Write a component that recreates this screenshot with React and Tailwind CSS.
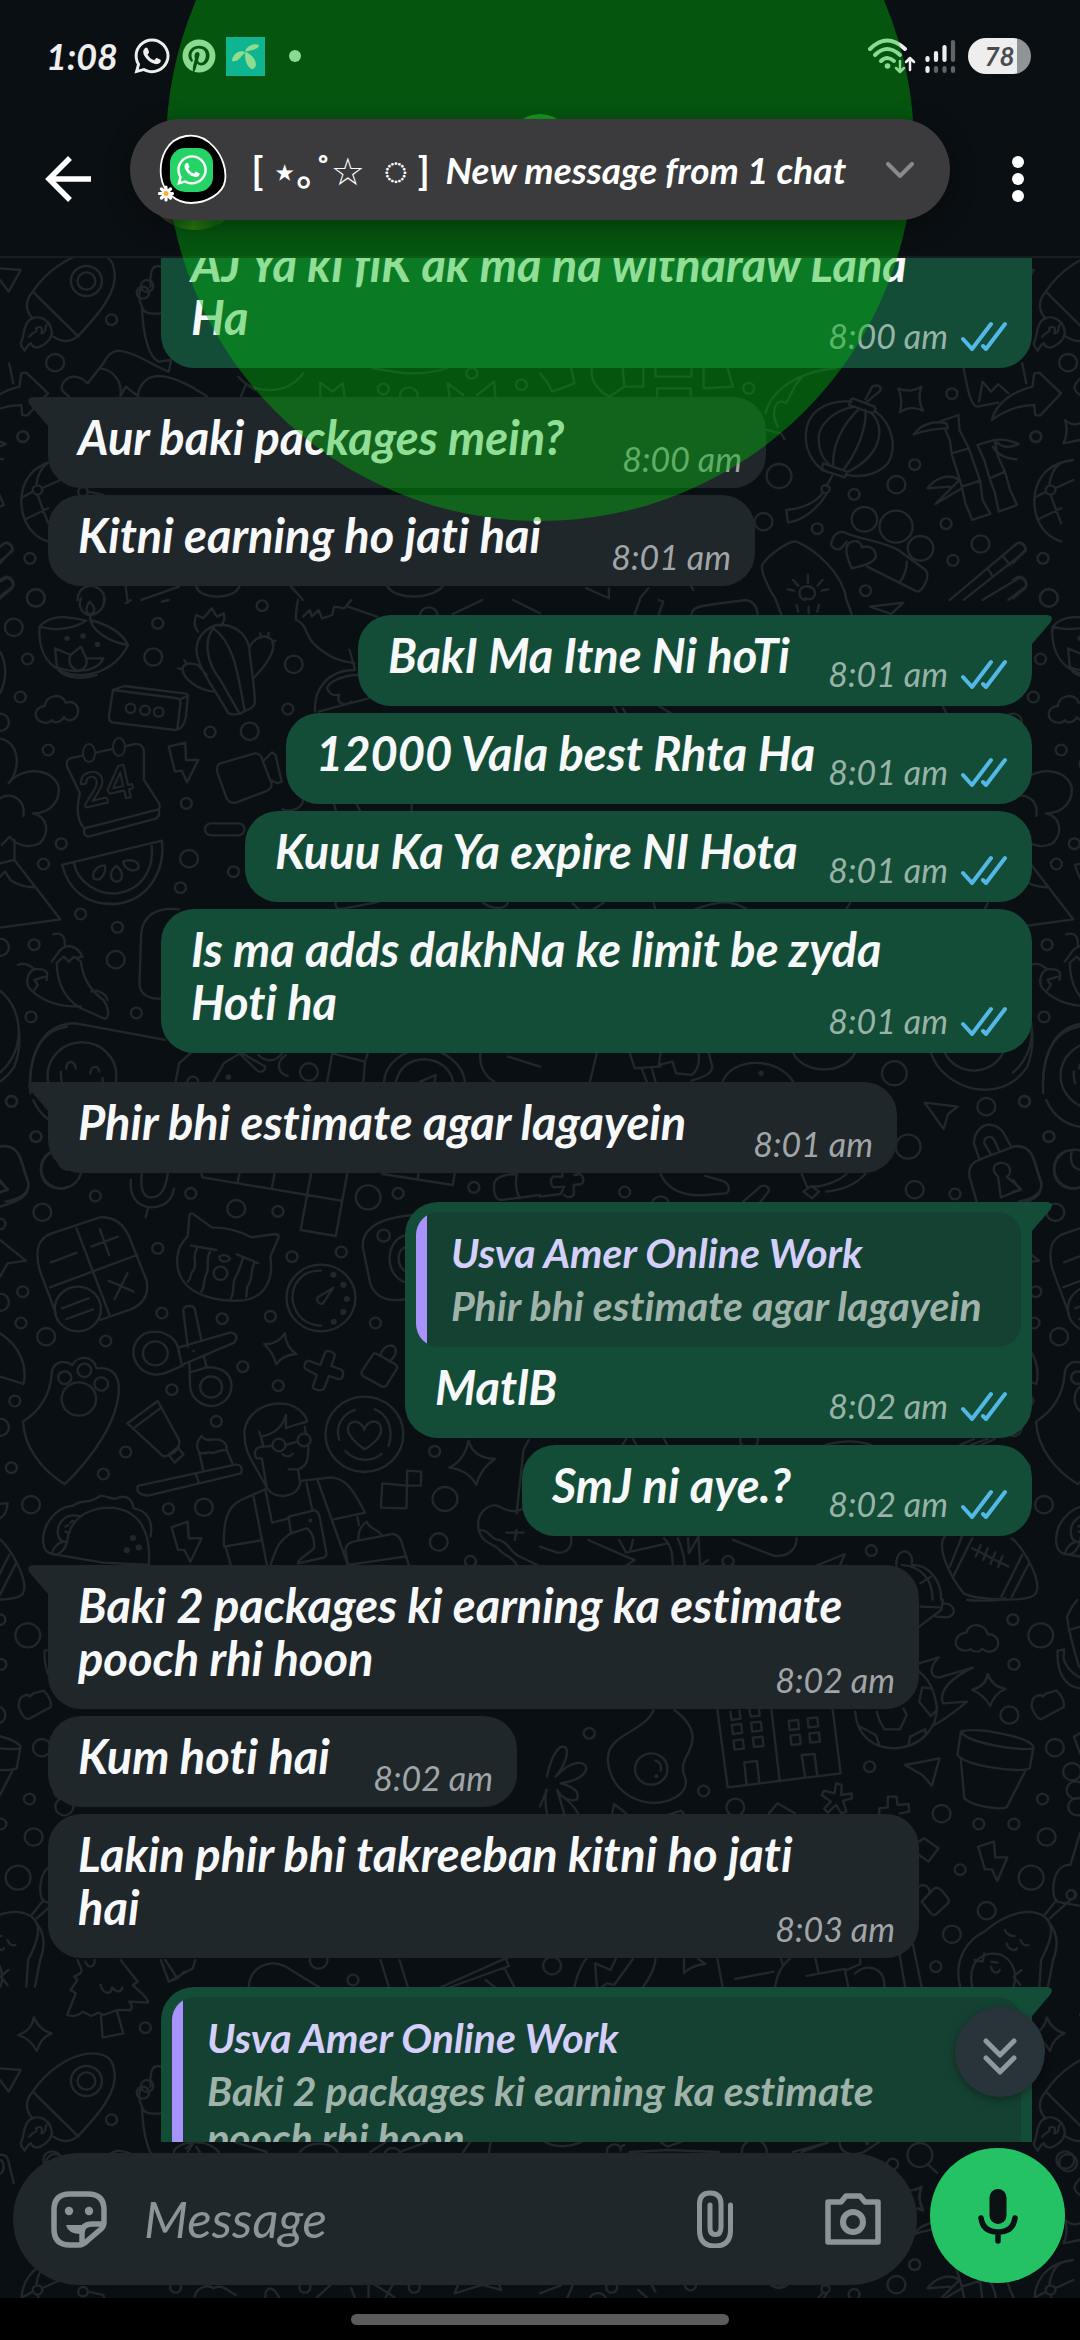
import React from "react";
import { FaWhatsapp, FaPinterest } from "react-icons/fa";

const SMALL = 16;
const MEDIUM = 26;
const LARGE = 36;

/* Doodle sheets of the wallpaper: an origin on the tile, line work, rings and solid dots. */
const sheets = [
  {
    origin: [0, 240],
    lines: [
      "M95 155C130 100 200 40 270 40C320 40 335 70 333 120C325 180 270 240 225 290C205 305 180 308 155 290M95 155L228 290M95 155C70 185 75 215 95 235",
      "M150 290C155 240 110 220 85 240C65 260 72 290 60 310C62 325 70 328 72 332C78 318 85 312 90 310C95 325 110 325 120 318C135 310 148 300 150 280M85 290C100 270 110 280 105 265C120 255 125 265 120 280C135 280 130 265 135 255",
      "M0 85L60 90L25 155L0 120",
      "M467 80C440 70 435 100 437 140M467 220C430 225 415 215 412 200C402 180 400 150 415 140M412 200C415 280 430 350 460 365L497 360L490 395C430 370 400 340 345 332C320 335 310 350 300 370L255 430C225 400 195 405 180 435C175 450 185 460 200 468M400 468C405 430 430 400 480 410C530 420 570 450 600 468M400 468L365 440L350 468M290 385C335 390 355 430 350 468",
      "M175 660C90 670 60 730 62 790C65 850 95 890 140 905M65 772L95 755M122 745L175 720M109 765L140 850M75 837L140 805M105 735C110 700 120 680 140 668M255 755L300 765L308 800",
      "M930 468L930 428L965 455L995 430L1000 468M1305 468L1300 430L1345 465M1385 465L1435 425L1438 468",
      "M880 400C830 470 730 460 692 410M740 450L715 432L700 468M1080 384C1160 400 1220 410 1300 384",
      "M0 970L35 930C40 915 20 900 10 912L0 920M0 1020L15 1010C35 1010 45 1030 35 1045L0 1075M225 1080C225 1040 270 1020 300 1060L305 1080M365 1040L370 1080M410 1080L520 1040M570 1040C580 1080 680 1080 695 1040M845 1040L880 1080M1125 1040C1150 1080 1250 1080 1285 1040",
    ],
    rings: [
      [251, 123, 45], [251, 123, 26], [427, 138, 18], [415, 158, 18], [109, 750, 14], [241, 755, 14],
      [324, 239, SMALL], [66, 590, SMALL], [87, 955, SMALL], [1113, 447, SMALL], [1514, 434, SMALL],
      [1370, 400, SMALL], [160, 368, MEDIUM], [104, 1073, MEDIUM], [1187, 468, MEDIUM],
    ],
  },
  {
    origin: [540, 240],
    lines: [
      "M905 485C850 480 790 500 775 560C760 630 800 680 825 690M975 515C1020 550 1040 620 1010 670C985 700 940 715 890 705M908 475L972 500Q978 512 965 520L898 495Q898 480 908 475ZM822 670L892 695L885 712L818 690ZM915 500C850 510 800 560 810 610C815 650 830 665 845 678M928 505C880 550 845 620 852 682M945 510C950 560 920 640 880 690M962 518C1000 560 1000 640 892 697",
      "M848 708L832 738M822 757C800 790 760 805 715 810L720 848C770 840 810 800 835 757M945 478L965 440C985 430 995 445 985 455L950 485",
      "M1040 445Q1075 460 1107 440Q1095 480 1112 512Q1075 495 1045 517Q1055 480 1040 445Z",
      "M1085 583C1105 555 1140 540 1180 550L1185 565C1150 565 1120 570 1085 583M1165 543L1215 525L1218 570L1245 625L1195 640L1190 600L1175 565M1195 640L1225 740L1278 722L1245 625M1225 740L1235 790L1255 840L1308 822L1285 780L1278 722M1270 615L1320 600L1330 650L1350 695L1305 715L1290 660ZM1305 715L1320 755L1332 815L1385 795L1365 750L1350 695M1320 600C1350 595 1375 605 1390 612C1365 625 1340 625 1320 600M1315 620C1330 650 1360 655 1383 658M1125 745C1150 710 1190 700 1218 720M1125 745L1190 740M1218 720L1148 792L1225 745",
      "M1230 385C1240 440 1250 500 1270 500L1330 488M1275 485L1285 425L1310 455L1330 432L1360 460M1400 370L1412 430",
      "M1312 540C1325 490 1370 455 1430 440L1435 400L1450 398L1513 460L1452 527L1438 525L1435 495C1390 495 1345 515 1312 540Z",
      "M890 905C870 940 855 930 845 915C850 880 870 870 890 880C940 900 1000 905 1040 930L1120 990C1135 1010 1110 1055 1095 1055L950 980M1065 965C1065 990 1055 1015 1045 1025M905 985C890 950 880 915 905 905C925 900 932 910 935 922C955 915 975 925 975 950C970 970 930 980 905 985Z",
      "M685 1080C660 1040 640 990 645 975C660 950 720 900 745 905C800 930 880 1000 890 1080M778 1005V1028M735 1020L750 1037M820 1020L806 1037M720 1048L738 1052M836 1048L818 1052M770 1075C790 1085 805 1065 795 1048C785 1035 758 1035 754 1055C752 1070 760 1080 770 1080",
      "M1190 1080L1385 910C1400 905 1415 925 1408 935L1230 1080M1300 985L1315 1010M1345 950L1365 975M1285 1080L1390 1015C1405 1012 1415 1030 1410 1040L1360 1080",
      "M655 570L700 580L710 598M655 520C665 470 720 400 860 384M690 560C670 520 680 470 715 490C730 460 740 430 760 412M150 384C145 430 180 460 200 468M240 384L245 440L205 468M300 384L300 440L245 440M335 384V410H440V384M340 468V445H438V468M475 384L475 445L560 440L545 384M0 400L20 425L35 455L100 430L90 384",
      "M1525 540Q1545 560 1568 550M1525 540Q1535 580 1520 610L1568 600M135 1045L200 1075V1045M290 1075L315 1045M445 1050L440 1040",
    ],
    rings: [
      [829, 747, 12], [942, 838, 37], [1034, 860, 48], [1105, 925, 37],
      [606, 445, SMALL], [1196, 461, SMALL], [1440, 590, SMALL], [1088, 674, SMALL], [912, 763, SMALL],
      [805, 866, SMALL], [1179, 851, SMALL], [1199, 961, SMALL], [945, 1052, SMALL],
      [694, 708, LARGE], [1035, 734, MEDIUM], [649, 845, MEDIUM], [1279, 912, MEDIUM],
    ],
  },
  {
    origin: [0, 600],
    lines: [
      "M115 80C110 140 130 190 180 215C240 240 330 220 372 135C350 90 300 70 262 60L262 45M115 80C150 40 200 50 250 62M115 80C160 95 220 85 250 62M262 60C270 90 310 125 372 135M165 200C175 235 240 240 280 225M165 200L160 145L205 165L235 140L250 175L300 175C290 200 260 212 235 212C220 215 180 210 165 200M205 165C195 190 210 210 230 212C250 205 255 190 250 175M262 45C240 45 225 20 235 -5M262 45C290 40 305 20 302 -5M262 45C245 35 250 20 260 5C275 20 280 35 262 45",
      "M130 368C95 365 95 320 130 318C135 280 185 280 190 308C230 295 240 350 208 360C195 365 190 355 185 352C175 370 155 370 150 360C145 368 140 370 130 368Z",
      "M328 270L360 258L535 280Q548 282 545 290L540 350Q532 388 510 390L330 368Q316 366 316 350ZM328 270L510 294Q525 296 524 310L515 385M522 298L545 288",
      "M660 335C620 260 570 200 570 145C575 95 620 70 650 75C690 80 725 110 725 160C730 210 740 260 740 310C735 330 710 330 700 340C685 345 665 345 660 335M620 85C590 120 600 190 640 240L695 340M620 85C680 130 690 220 710 330M575 95C560 75 565 60 570 45L590 55L615 25L630 50L650 40C655 60 645 75 640 78M725 140C740 110 770 100 790 120C805 150 770 200 735 235M620 275C580 270 530 240 530 205C535 185 560 190 575 195L600 225M755 100L760 112M780 98L778 110M800 122L790 128M518 205L530 208M535 180L542 192",
      "M232 580L195 500C190 480 200 475 215 472L395 432C415 432 418 445 418 460L418 540L462 610C465 620 463 625 460 628L245 685C230 670 222 640 228 600ZM245 685C240 705 250 712 265 708L455 655C465 645 463 635 460 628",
      "M490 440L538 428L540 480L576 480L543 547L528 512L508 515Z",
      "M640 490L740 460C755 460 760 470 762 480L788 550C790 565 780 570 770 575L685 608C665 610 660 600 656 590L632 520C628 505 630 495 640 490ZM768 480L790 457L800 465L818 545L805 550L785 540",
      "M25 550C60 510 60 430 0 415M25 550C60 500 150 500 170 560C175 600 150 640 95 640C140 650 145 700 115 730C90 745 50 740 28 710L5 735M0 595C30 575 75 595 68 648M42 720L42 780L175 958L0 983M0 790L42 780M0 830L15 815L30 840C45 850 60 860 100 862",
      "M613 670H692A18 18 0 0 1 692 706H613A18 18 0 0 1 613 670Z",
      "M180 795L470 722C480 800 440 900 335 912C250 915 200 870 180 795ZM215 790C225 850 290 885 340 880C410 870 450 810 440 732M305 797C285 795 265 815 272 835C295 850 308 815 305 797ZM338 798C320 810 315 835 335 845C360 845 360 815 338 798ZM358 785C360 805 385 820 402 805C405 785 385 775 358 785Z",
      "M155 1003C180 995 190 1010 188 1040M150 1085C170 1060 175 1040 200 1038C225 1040 235 1060 240 1070L228 1072M165 1088C165 1150 190 1200 235 1225L305 1257C320 1250 315 1220 300 1200C260 1170 240 1130 235 1085L215 1070L200 1085L185 1070L165 1088M52 1095C75 1085 90 1100 100 1108C140 1105 140 1120 135 1140M100 1108C80 1115 70 1150 90 1170C120 1200 160 1220 235 1220M100 1170L110 1155L100 1140L130 1130M265 1175C285 1165 310 1185 312 1200",
      "M520 928C450 920 415 950 410 1000L405 1150C405 1180 430 1200 467 1195M0 1172C70 1230 75 1350 0 1418M0 155C20 190 20 240 0 280",
      "M88 1480C80 1350 130 1270 220 1270L480 1320M192 1405C195 1380 215 1380 220 1405M262 1420C265 1395 285 1395 288 1415M177 1415C175 1430 178 1440 180 1450M298 1435V1450",
      "M510 1445L520 1390L555 1358M620 1445L650 1390L700 1358L770 1400C770 1415 755 1420 745 1410L700 1365M820 1358C800 1390 770 1385 750 1365M950 1445L965 1360L1060 1385L1055 1445M1068 1358L1060 1385M1115 1445C1120 1390 1170 1350 1230 1345C1300 1350 1345 1400 1350 1445M1150 1445C1160 1400 1190 1380 1232 1378C1280 1380 1310 1410 1315 1445M1220 1445L1265 1425L1262 1445M835 1428C805 1420 800 1385 830 1365M1395 1358C1390 1400 1410 1430 1435 1445M1475 1370L1568 1400",
      "M915 335C910 270 950 210 1030 210M860 60C890 70 890 110 910 130C960 180 1000 185 1030 190M1015 150L1030 205M1040 225C990 225 950 250 950 265C960 290 975 285 985 285C975 310 1000 320 1020 305M925 335L1070 295M865 0C860 30 858 50 860 60M880 50L900 30L905 50L925 30L935 55L965 45L970 20L1000 25L1020 0M1010 20L1095 50M1315 42L1400 0M1490 0L1568 40M365 10L380 0M470 5L490 0M820 628C850 640 880 620 880 600M970 612L975 632M1035 612L1045 632M1195 612V632M975 906C970 925 985 930 1000 925L1100 906M1400 906C1430 930 1470 930 1475 906",
    ],
    rings: [
      [379, 325, 14], [421, 331, 14], [461, 336, 14], [238, 1427, 100],
      [40, 82, MEDIUM], [445, 171, MEDIUM], [853, 193, MEDIUM], [725, 394, MEDIUM], [549, 776, MEDIUM],
      [336, 1079, MEDIUM], [897, 1416, MEDIUM], [0, 367, MEDIUM], [0, 1042, MEDIUM], [104, -6, MEDIUM], [1245, 48, MEDIUM],
      [458, 70, SMALL], [761, 17, SMALL], [80, 177, SMALL], [59, 291, SMALL], [836, 327, SMALL],
      [610, 396, SMALL], [140, 450, SMALL], [541, 610, SMALL], [178, 731, SMALL], [126, 792, SMALL],
      [678, 815, SMALL], [524, 863, SMALL], [234, 942, SMALL], [341, 982, SMALL], [99, 1034, SMALL],
      [396, 1239, SMALL], [90, 1251, SMALL], [560, 1446, SMALL],
    ],
    dots: [[195, 115, 8], [241, 108, 8], [283, 133, 8], [663, 1432, 8]],
  },
  {
    origin: [540, 600],
    lines: [
      "M275 42L290 0M345 42L358 5L345 0M440 42C445 20 460 20 520 10L600 0C620 5 630 20 632 42M958 20L1055 8L1020 42ZM685 0L700 42M890 0L905 42M780 20V40M745 15L750 35M810 15L805 35M215 320L225 340M240 325L250 340M1170 320L1180 340M380 340L345 318",
      "M145 1445L165 1360M260 1358L275 1405L350 1400M295 1405L310 1445M325 1405L335 1445M350 1358L345 1395L385 1385L395 1420L440 1425C460 1410 465 1390 460 1358M490 1358L500 1400C500 1420 480 1430 440 1442M530 1445C560 1370 690 1370 735 1445M735 1358C760 1420 880 1430 915 1358M1135 1358C1170 1470 1340 1520 1415 1400C1430 1360 1432 1320 1428 1285M1175 1358C1210 1430 1310 1430 1345 1358M1568 1280C1500 1290 1465 1350 1460 1445",
      "M95 910L130 945L185 908M330 910L335 928M450 928C520 900 560 900 600 928M900 910L890 928M1300 910L1290 930",
    ],
    rings: [[1029, 1420, LARGE]],
    dots: [[642, 1420, 8]],
  },
  {
    origin: [0, 1100],
    lines: [
      "M115 510C100 450 110 415 150 400L290 352C335 350 360 375 375 410L425 540C435 590 410 615 380 628L290 660M115 510L162 640M222 385L318 645M145 562L398 465M148 487L223 458M265 440L342 410M290 388L317 465M315 542L388 575M370 520L333 597M180 625L257 595M193 657L270 628",
      "M545 410L550 345Q555 335 565 345L615 382C660 382 700 395 730 412L800 402Q812 402 808 415L785 470C795 540 770 595 700 602C640 605 560 590 530 540C505 500 510 440 545 410ZM555 437L628 450M572 445C555 475 575 490 562 510C545 530 560 535 545 545M610 455C595 480 610 500 600 520C590 540 595 560 585 575M688 463L750 490M705 475C700 500 690 520 680 540C675 570 680 580 670 595M738 490C725 520 735 540 718 560L715 590M636 470C650 460 665 468 668 478C655 488 640 488 636 470Z",
      "M412 222C405 270 420 295 440 292C470 290 480 265 487 222M380 240C375 290 400 322 440 322C480 320 500 300 505 265M430 322L423 352",
      "M585 222L588 232L990 302M695 222L690 245M797 222L790 262M903 222L873 390L975 408L1008 222M1110 222L1315 255L1320 222M1215 222L1213 235M1435 250C1440 230 1470 222 1500 222M1435 250C1432 280 1440 300 1455 300L1568 285M1500 222C1495 260 1500 280 1510 295",
      "M932 512C870 510 845 560 850 605C860 650 890 675 932 677M968 563L925 590C915 600 925 615 938 610Z",
      "M585 722L565 625C560 615 535 615 532 630L545 740M517 743L670 697C690 700 690 718 680 728L528 795L517 743C510 715 480 695 450 695C400 695 380 740 390 775C405 820 450 835 490 815L530 797M550 790L552 860C555 900 590 920 620 918C665 910 680 870 668 835C655 805 620 800 597 803L553 817M592 770L600 800",
      "M767 732Q805 735 827 700Q830 740 860 762Q820 765 802 793Q795 760 767 732Z",
      "M930 795L945 755C960 750 975 760 972 768L962 798L993 810C1000 820 995 838 985 838L955 828L940 868C925 875 910 868 908 860L920 825L888 808C880 798 885 785 895 782Z",
      "M1085 760L1050 815C1048 825 1052 828 1060 832L1110 860C1118 862 1122 858 1125 852L1153 805C1155 798 1150 793 1143 790L1095 762ZM1105 765C1110 745 1130 730 1145 740C1155 755 1145 775 1130 785",
      "M150 825C150 790 180 775 210 795C225 765 270 765 280 805C320 800 345 820 345 865C345 960 270 1070 188 1153C120 1110 70 1040 67 965C120 930 145 880 150 825Z",
      "M370 970L458 903L520 1020C525 1050 500 1065 475 1070ZM387 985L465 925M490 1065L515 1042L533 1063L507 1088Z",
      "M400 1158L680 1095C700 1090 705 1105 700 1120L430 1187C405 1185 395 1175 400 1158M568 1120L578 1150M590 1110L578 1055C565 1035 575 1020 585 1008C595 1025 610 1018 630 1018C655 1020 660 1040 658 1050L675 1090M578 1058C590 1065 605 1055 612 1058C630 1062 640 1045 658 1052",
      "M775 1165C740 1090 705 1060 710 990C720 930 780 905 830 912C870 920 890 950 892 965C880 970 860 970 830 985L830 945C820 985 790 1005 758 1010C755 1005 753 998 753 995M758 1010L765 1040C740 1040 735 1060 745 1075L760 1075L775 1165C800 1200 860 1195 872 1150L865 1108C890 1100 897 1080 895 1035M885 980L888 1003M838 1108L865 1108M765 1040L790 1038M832 1035L862 1025M820 1062C830 1072 845 1070 850 1062",
      "M650 1340C648 1260 660 1220 700 1200L770 1168L790 1268L840 1255M735 1185L775 1395M650 1340L755 1322M655 1340L670 1395M875 1143L960 1132C1010 1135 1030 1180 1060 1238L970 1258M922 1140L1010 1395M890 1150L907 1230M838 1250L910 1232C920 1230 925 1240 928 1250L948 1360C948 1370 940 1375 930 1375L865 1390C865 1375 900 1360 912 1345C915 1310 900 1290 890 1285L845 1300ZM845 1300C800 1330 800 1360 785 1395",
      "M1058 1048C1020 1020 1000 995 1015 972C1035 955 1055 975 1058 990C1062 970 1085 955 1102 972C1118 1000 1090 1030 1058 1048ZM985 1020C970 975 1000 940 1030 930M1088 928C1125 940 1145 990 1128 1038M1003 1053C1030 1085 1080 1088 1108 1062",
      "M1110 1150L1182 1157L1180 1225L1106 1223ZM1182 1112L1223 1115L1222 1157L1182 1157Z",
      "M1010 1395L1003 1350C1005 1330 1020 1325 1040 1322L1140 1302C1160 1305 1165 1320 1170 1340L1187 1395M1010 1395L1175 1370M1040 1320C1040 1290 1050 1275 1065 1265C1070 1285 1100 1290 1108 1305M1038 1250L1042 1275",
      "M1360 1022Q1375 1075 1437 1077Q1395 1105 1383 1155Q1360 1110 1305 1103Q1350 1080 1360 1022Z",
      "M498 1282L545 1265L548 1315L585 1315L553 1385L535 1350L517 1350Z",
      "M150 1362C120 1355 120 1310 135 1275C155 1240 180 1220 210 1218C240 1195 260 1215 290 1188C310 1185 330 1205 345 1192C370 1185 385 1200 388 1225C430 1230 445 1270 437 1310M150 1362L300 1388L432 1395C440 1290 400 1225 315 1223C240 1225 200 1270 195 1325C190 1345 175 1370 150 1362M235 1250C190 1235 165 1270 168 1300C170 1320 180 1325 190 1325M150 1362C155 1340 170 1325 190 1325M190 1280L198 1275M205 1268L212 1262M190 1295L200 1298",
      "M1390 1290C1380 1240 1420 1205 1450 1220C1490 1245 1520 1230 1530 1215M1390 1290C1400 1330 1430 1330 1445 1345C1465 1370 1490 1370 1500 1395M1390 1290C1420 1290 1420 1310 1440 1318C1470 1320 1480 1350 1500 1365L1560 1395M1500 1240L1520 1050L1535 1020M1495 1320L1500 1290M1470 1298H1520",
      "M0 420L75 482L22 490L0 530M0 700C60 740 80 800 68 852L0 830M0 140C40 135 55 160 60 180L82 250C85 290 60 300 0 320M0 240L22 270L0 275M0 1212L22 1210C20 1240 10 1250 0 1255",
      "M1200 345C1080 355 1045 400 1055 450L1075 550C1090 595 1130 605 1176 598M1180 405C1115 420 1115 530 1180 548M1180 440C1150 450 1150 500 1180 515",
    ],
    rings: [
      [226, 627, 67], [640, 520, 20], [932, 594, 100], [451, 760, 36], [613, 861, 32],
      [188, 833, 19], [245, 811, 20], [294, 852, 20], [229, 897, 50], [810, 1035, 19], [883, 1020, 19],
      [1058, 1003, 113], [1114, 407, 18], [178, 207, 58],
      [123, 337, MEDIUM], [686, 326, MEDIUM], [134, 710, MEDIUM], [90, 1214, MEDIUM], [592, 1222, MEDIUM],
      [1274, 1326, MEDIUM], [0, 607, MEDIUM], [0, 982, MEDIUM], [1069, 292, LARGE], [1292, 1197, LARGE],
      [104, 110, SMALL], [277, 288, SMALL], [554, 280, SMALL], [807, 334, SMALL], [1156, 280, SMALL],
      [1376, 262, SMALL], [458, 445, SMALL], [848, 470, SMALL], [991, 456, SMALL], [66, 575, SMALL],
      [470, 639, SMALL], [645, 656, SMALL], [785, 649, SMALL], [1090, 669, SMALL], [61, 669, SMALL],
      [307, 723, SMALL], [705, 800, SMALL], [499, 869, SMALL], [43, 903, SMALL], [808, 857, SMALL],
      [628, 964, SMALL], [365, 1056, SMALL], [33, 1103, SMALL], [300, 1122, SMALL], [489, 1226, SMALL],
      [1262, 1054, SMALL], [1366, 1384, SMALL], [33, 4, SMALL], [0, 372, SMALL],
    ],
    dots: [[968, 524, 9], [997, 554, 9], [1007, 597, 9], [997, 636, 9], [969, 665, 9], [386, 1314, 9], [368, 1351, 9], [403, 1343, 9], [562, 753, 4], [901, 1262, 6]],
  },
  {
    origin: [540, 1100],
    lines: [
      "M1275 175L1260 130C1260 90 1290 70 1310 75C1345 80 1350 110 1367 138M1308 160L1290 130C1288 110 1310 105 1318 118L1332 150M1268 305L1247 230C1243 195 1260 185 1285 175L1380 138C1415 135 1428 160 1435 180L1455 245C1460 275 1440 290 1415 298L1390 305M1330 230C1310 210 1315 190 1340 188C1370 190 1370 225 1355 230L1397 268L1338 292Z",
      "M1117 8L1213 20L1185 42L1172 87Z",
      "M1545 150C1500 150 1480 200 1500 240C1520 270 1560 270 1568 260M1545 150C1535 190 1550 205 1568 210M1470 0C1490 50 1530 75 1568 80",
      "M350 222C370 270 420 290 480 285L540 280C555 270 550 245 520 240L480 228M760 222L775 260M830 275C880 270 920 250 945 222M790 260C830 260 870 240 890 222M765 275L788 258L810 275L790 295ZM590 305L640 260C660 250 670 270 660 280L640 305M0 290L60 282L70 260L40 262C30 255 28 235 40 230H65V222M100 225L115 222C130 230 128 250 118 252L98 255V285C90 295 75 292 70 285",
      "M140 1320L250 1370L275 1380L245 1400M90 1310C95 1340 80 1360 50 1358L0 1340M230 1320L250 1358L370 1330M360 1315C385 1340 385 1370 385 1398M400 1315C415 1350 420 1370 420 1398M430 1315L432 1360L460 1310L465 1398L488 1380M560 1320L680 1368C720 1370 745 1350 745 1315M800 1398L885 1362L870 1398M270 1320L262 1352",
      "M1035 1398C1030 1350 1070 1340 1080 1375L1080 1395C1130 1395 1165 1440 1165 1500M1050 1395C1110 1400 1140 1440 1140 1500M1105 1450L1135 1430",
      "M1175 1310C1150 1340 1190 1430 1230 1480C1260 1500 1420 1510 1440 1480C1460 1440 1400 1340 1370 1315M1255 1315L1200 1430M1400 1365L1340 1490M1225 1310L1190 1400M1420 1390L1370 1490M1255 1345L1360 1400M1280 1335L1265 1370M1300 1345L1287 1380M1322 1357L1308 1392M1343 1368L1330 1402",
      "M240 1035L250 1017M280 1035L270 1017M360 1017L370 1035M830 1035C880 1020 920 1020 960 1035M1220 1035L1260 1017M1250 1035L1300 1017M1280 1035L1320 1017",
    ],
    rings: [
      [1069, 140, LARGE], [1296, 20, MEDIUM], [1088, 269, MEDIUM], [607, 1020, MEDIUM], [350, 315, MEDIUM],
      [1478, 110, SMALL], [1205, 282, SMALL], [246, 276, SMALL], [962, 1352, SMALL], [546, 1384, SMALL], [1407, 4, SMALL],
    ],
  },
  {
    origin: [540, 1600],
    lines: [
      "M1235 152C1195 150 1200 100 1238 98C1245 65 1295 70 1300 103C1340 100 1340 155 1305 155C1295 157 1290 148 1283 147C1275 160 1255 155 1250 147C1245 152 1240 152 1235 152Z",
      "M1430 300C1435 290 1445 285 1455 285L1460 290L1470 280L1500 272C1515 285 1525 310 1520 322L1455 358C1440 355 1430 330 1427 318Z",
      "M1222 395C1270 380 1420 410 1433 440L1422 505C1400 520 1240 500 1212 465ZM1222 395C1240 430 1400 455 1433 445M1222 480L1232 595C1260 620 1330 630 1355 622L1408 515",
      "M1060 495L1160 475L1138 557L1110 525Z",
      "M1300 222Q1315 262 1352 267Q1320 280 1307 318Q1290 285 1255 270Q1295 258 1300 222Z",
      "M1272 740L1318 725L1322 772L1357 772L1328 843L1312 808L1292 808Z",
      "M1108 905L1145 865Q1155 860 1165 870L1185 895Q1190 905 1183 912L1150 943Q1142 948 1135 940ZM1101 860C1120 845 1135 870 1130 880M1101 725L1115 715L1157 745L1128 785L1101 765",
      "M915 335C920 410 970 445 1030 445C1110 440 1155 380 1152 320C1145 270 1130 240 1101 215M1101 190L1158 172C1130 200 1130 235 1160 232L1257 203C1200 230 1155 270 1170 310L1240 305C1210 330 1190 350 1145 375M1055 325L1065 345L1045 388L1000 388L985 360L978 335M1110 262L1101 305L1135 348L1152 330M1110 262L1135 265M930 380L975 405L985 435M1070 435L1075 410L1118 388L1120 400",
      "M515 330L545 562L873 520L850 330M672 330L696 543M600 555L593 487L630 483L637 550M770 533L760 465L797 462L805 527M553 335L556 360L582 356L579 332M608 330L612 350L638 347L636 330M557 375L560 402L587 399L584 372ZM613 368L616 395L644 392L641 365ZM562 421L565 449L592 446L589 418ZM618 413L621 441L649 438L646 410ZM722 363L725 390L752 387L749 360ZM777 355L780 382L808 379L805 352ZM727 407L730 435L757 432L754 404ZM782 400L785 428L813 425L810 397Z",
      "M330 330C300 400 195 400 197 480C200 540 240 590 300 605C370 620 440 580 420 530C400 480 445 460 443 410C440 370 410 345 390 330M335 482C348 485 355 500 350 512",
      "M20 530C30 480 50 435 70 440C90 450 70 500 45 530C90 480 130 480 135 505C130 535 90 545 60 550C100 560 120 580 105 600C80 605 60 590 50 570M20 570L0 620M50 570L70 640M18 570C15 600 15 620 20 640M65 590C80 600 100 620 110 640",
      "M855 580L860 550L876 555L875 585L905 580L905 595L880 603L890 635L875 640L860 615L835 638L825 625L845 605L818 585L825 572Z",
      "M985 640L985 625L1010 622L1010 590L1035 590L1038 615L1070 612L1072 635L1045 640M665 640L690 610L740 640M210 640L215 612L250 640M370 645L410 632L420 645",
      "M1220 1160C1200 1080 1240 1020 1290 995C1350 940 1420 920 1465 950C1500 980 1480 1030 1455 1080L1450 1160M1480 970C1510 1010 1500 1050 1490 1080L1475 1160M1255 1160C1240 1080 1290 1050 1340 1065C1380 1085 1385 1130 1375 1160M1350 990C1355 1005 1370 1010 1378 1008M1355 1030C1360 1050 1380 1055 1385 1045M1395 1020C1400 1035 1410 1038 1418 1035M1310 1085L1328 1088M1310 1100C1312 1120 1330 1122 1335 1110M1262 1080L1285 1085L1290 1060M1398 1110L1375 1130L1395 1155M1465 945L1500 900M1480 955L1540 900C1555 895 1558 880 1545 870M1540 795C1490 790 1480 880 1500 905L1568 918M1540 795L1568 700",
      "M100 1160C110 1110 130 1080 135 1077M165 1160L160 1090L205 1110L220 1077M270 1077L215 1155L195 1150L180 1160M300 1160C320 1130 335 1100 335 1077M418 1077L418 1120Q440 1095 480 1092L460 1077M515 1077L530 1160M567 1137L678 1115M683 1160C690 1110 710 1090 725 1077M700 1077L705 1095M800 1077L808 1115M775 1128L885 1107L895 1160M890 1110L930 1092V1077M915 1120C950 1090 1000 1100 1000 1160M1040 1040L1060 1160M1082 1030L1108 1160",
      "M1503 152L1522 148L1520 175C1530 210 1560 230 1568 232M1503 152C1500 210 1520 260 1568 265M1530 50L1545 20L1560 0M1530 50C1535 90 1550 150 1565 200M1535 90L1568 80M1101 80L1165 30L1170 0M1105 20L1160 22M1170 10C1210 10 1210 50 1180 52L1150 50M1550 410L1568 400M1550 410L1568 460M1240 0C1300 5 1340 0 1350 -5",
    ],
    rings: [
      [323, 507, 47], [1545, 515, 26], [1555, 570, 26], [1560, 620, 26], [1543, 884, 14],
      [1454, 106, LARGE], [1426, 833, LARGE], [1363, 345, MEDIUM], [1495, 443, MEDIUM], [1471, 711, MEDIUM],
      [1166, 641, MEDIUM], [1297, 932, MEDIUM], [1196, 1003, MEDIUM], [567, 622, MEDIUM], [35, 1097, MEDIUM],
      [1373, 59, SMALL], [1376, 193, SMALL], [143, 400, SMALL], [957, 500, SMALL], [475, 573, SMALL],
      [1459, 597, SMALL], [1274, 672, SMALL], [1376, 672, SMALL], [1220, 809, SMALL], [1149, 1100, SMALL],
    ],
    dots: [[338, 529, 6]],
  },
  {
    origin: [0, 1960],
    lines: [
      "M225 0C235 30 250 35 215 50L225 60L205 90L220 100L195 165C210 170 230 168 240 155L265 168L285 158L300 165L340 150L380 150C385 140 380 130 375 125L430 128C430 110 400 90 385 75L400 65L350 0M293 165L298 233L358 220L340 155M292 75C300 105 325 105 325 82C345 105 355 90 355 82M248 5C255 25 275 25 275 0",
      "M467 0L490 65L560 25L567 0M490 65L515 55L480 0M515 55L535 35",
      "M98 172Q115 212 150 220Q118 232 107 273Q90 238 53 225Q92 212 98 172Z",
      "M722 84C725 20 780 -5 830 20L930 84M1105 0L1130 84M1160 0L1185 84M1275 84L1480 -10M1300 84L1478 18L1470 0M1465 25L1495 84M1410 60L1440 84",
      "M505 576C510 545 600 530 635 576M540 565L560 550L545 576M570 560L580 576M680 546L775 576M870 576C900 540 960 545 980 576M1075 576L1120 546M1160 576L1240 546M1345 576L1365 546M1420 576L1425 546",
      "M565 1010C570 985 600 970 620 985C650 970 660 995 685 1005M770 1012C770 985 790 970 810 1012M920 1012L960 975M1020 985L1030 1012M1070 1012V975M1090 975L1145 1012M1120 1012L1140 975M1320 1000L1330 975M1320 1000L1400 975L1455 990L1450 975",
      "M0 585C20 580 25 600 28 620L40 670M0 600C15 605 12 640 0 640",
    ],
    rings: [[422, 203, SMALL], [1025, 60, SMALL], [510, 982, SMALL], [885, 982, SMALL], [1203, 982, SMALL], [925, 0, MEDIUM], [1140, 590, MEDIUM], [152, 600, MEDIUM]],
  },
  {
    origin: [540, 1960],
    lines: [
      "M1125 612L1152 638M1100 712L1112 750L1097 745M1090 690L1108 682L1100 712M195 576C190 555 230 540 235 570M235 560L245 555M260 576L370 570L520 576M350 546L370 560L410 546M735 576L835 548L760 576M870 546C870 580 905 590 940 576L985 546M0 1000L60 976M80 1012L95 976M285 990L310 1012M325 976L335 995M15 546C50 565 90 560 120 546",
    ],
    rings: [[1103, 585, LARGE], [622, 575, LARGE], [208, 982, SMALL], [437, 975, SMALL], [1088, 914, SMALL], [1024, 612, SMALL], [692, 955, MEDIUM], [168, 1025, MEDIUM]],
    dots: [[950, 550, 6]],
  },
];

function Wallpaper() {
  return (
    <svg className="absolute inset-0 h-full w-full" aria-hidden="true">
      <defs>
        <g id="doodles" fill="none" stroke="#22272b" strokeWidth="7" strokeLinecap="round" strokeLinejoin="round">
          {sheets.map((sheet, i) => (
            <g key={i} transform={`translate(${sheet.origin[0]} ${sheet.origin[1]}) scale(0.3444 0.3333)`}>
              {sheet.lines.map((d, j) => (
                <path key={j} d={d} />
              ))}
              {sheet.rings.map(([x, y, r], j) => (
                <circle key={j} cx={x} cy={y} r={r} />
              ))}
              {(sheet.dots || []).map(([x, y, r], j) => (
                <circle key={j} cx={x} cy={y} r={r} fill="#22272b" stroke="none" />
              ))}
            </g>
          ))}
          <ellipse cx="89" cy="753" rx="6" ry="9" fill="#0a0f13" strokeWidth="2" />
          <ellipse cx="119" cy="747" rx="6" ry="9" fill="#0a0f13" strokeWidth="2" />
          <text x="84" y="808" fontSize="46" fontWeight="700" fontStyle="normal" strokeWidth="2" transform="rotate(-13 84 808)">
            24
          </text>
        </g>
      </defs>
      <use href="#doodles" />
      <use href="#doodles" x="-1013" />
      <use href="#doodles" x="1013" />
      <use href="#doodles" y="1800" />
      <use href="#doodles" x="1013" y="1800" />
    </svg>
  );
}

function Ticks() {
  return (
    <svg viewBox="0 0 48 30" className="h-[30px] w-12 shrink-0" fill="none" stroke="#53b8e5" strokeWidth="4" strokeLinecap="round" strokeLinejoin="round" role="img" aria-label="Read">
      <path d="M3 18L12 28L31 3" />
      <path d="M23 25L26 28L45 3" />
    </svg>
  );
}

function Tail({ side }) {
  return side === "out" ? (
    <svg viewBox="0 0 21 30" className="absolute top-0 left-full h-[30px] w-[21px]" fill="#144d37" aria-hidden="true">
      <path d="M0 0H15Q23 1 18 8L0 29Z" />
    </svg>
  ) : (
    <svg viewBox="0 0 21 30" className="absolute top-0 right-full h-[30px] w-[21px]" fill="#1f272a" aria-hidden="true">
      <path d="M21 0H6Q-2 1 3 8L21 29Z" />
    </svg>
  );
}

function Quote({ name, text }) {
  return (
    <blockquote className="mx-[11px] mt-[10px] flex overflow-hidden rounded-[23px] bg-[#154133]">
      <span className="w-[11px] shrink-0 bg-[#a793fb]" />
      <span className="block pt-3 pr-3 pb-[18px] pl-6 text-[41px] font-bold whitespace-pre">
        <cite className="block leading-[58px] text-[#d5cffb]">{name}</cite>
        <span className="block leading-[47px] text-[#9fb3aa]">{text}</span>
      </span>
    </blockquote>
  );
}

function Bubble({ side, width, text, time, tail, quote }) {
  const out = side === "out";
  const box = out ? "self-end bg-[#144d37]" : "self-start bg-[#1f272a]";
  const corner = tail ? (out ? "rounded-tr-none" : "rounded-tl-none") : "";
  return (
    <li className={`relative max-w-full rounded-[33px] ${box} ${corner} ${width} ${tail ? "mt-[22px]" : ""}`}>
      {tail && <Tail side={side} />}
      {quote && <Quote {...quote} />}
      <div className="grid pt-[14px] pr-6 pb-6 pl-[30px]">
        <p className="col-start-1 row-start-1 text-[47px] leading-[53px] font-bold whitespace-pre text-[#f7f8fa]">{text}</p>
        <div className={`col-start-1 row-start-1 flex items-center gap-3 self-end justify-self-end ${out ? "-mb-3 text-[#98b3a7]" : "-mb-[15px] text-[#a2a5a8]"}`}>
          <time className="text-[34px] leading-10">{time}</time>
          {out && <Ticks />}
        </div>
      </div>
    </li>
  );
}

const messages = [
  { side: "out", width: "w-[871px]", text: "AJ Ya kI fiK ak ma na withdraw Lana\nHa", time: "8:00 am" },
  { side: "in", width: "w-[718px]", text: "Aur baki packages mein?", time: "8:00 am", tail: true },
  { side: "in", width: "w-[707px]", text: "Kitni earning ho jati hai", time: "8:01 am" },
  { side: "out", width: "w-[674px]", text: "BakI Ma Itne Ni hoTi", time: "8:01 am", tail: true },
  { side: "out", width: "w-[746px]", text: "12000 Vala best Rhta Ha", time: "8:01 am" },
  { side: "out", width: "w-[787px]", text: "Kuuu Ka Ya expire NI Hota", time: "8:01 am" },
  { side: "out", width: "w-[871px]", text: "Is ma adds dakhNa ke limit be zyda\nHoti ha", time: "8:01 am" },
  { side: "in", width: "w-[849px]", text: "Phir bhi estimate agar lagayein", time: "8:01 am", tail: true },
  { side: "out", width: "w-[627px]", text: "MatlB", time: "8:02 am", tail: true, quote: { name: "Usva Amer Online Work", text: "Phir bhi estimate agar lagayein" } },
  { side: "out", width: "w-[510px]", text: "SmJ ni aye.?", time: "8:02 am" },
  { side: "in", width: "w-[871px]", text: "Baki 2 packages ki earning ka estimate\npooch rhi hoon", time: "8:02 am", tail: true },
  { side: "in", width: "w-[469px]", text: "Kum hoti hai", time: "8:02 am" },
  { side: "in", width: "w-[871px]", text: "Lakin phir bhi takreeban kitni ho jati\nhai", time: "8:03 am" },
  { side: "out", width: "w-[871px]", text: "", time: "", tail: true, quote: { name: "Usva Amer Online Work", text: "Baki 2 packages ki earning ka estimate\npooch rhi hoon" } },
];

function StatusBar() {
  return (
    <div className="flex h-10 items-center pr-[49px] pl-[46px] text-[#eeeeee]">
      <span className="w-[86px] text-[36px] leading-10 font-bold">1:08</span>
      <FaWhatsapp className="size-10" aria-label="WhatsApp" />
      <FaPinterest className="ml-2.5 size-[34px]" aria-label="Pinterest" />
      <svg viewBox="0 0 39 39" className="ml-2.5 size-[39px]" role="img" aria-label="Telenor">
        <rect width="39" height="39" fill="#1bb0ef" />
        <g fill="#f4f6ee">
          <path d="M19 14C22 8 28 6 33 8C32 13 25 13 20 14.500Z" />
          <path d="M19 15C13 12 6 18 6 24C12 26 15 19 19.500 15Z" />
          <path d="M19.500 15C18 21 21 32 27 32C33 29 29 19 20 15Z" />
        </g>
      </svg>
      <span className="ml-6 size-3 rounded-full bg-current" />
      <svg viewBox="0 0 50 38" className="ml-auto h-[38px] w-[50px]" fill="none" stroke="currentColor" strokeLinecap="round" strokeLinejoin="round" role="img" aria-label="Wi-Fi">
        <g strokeWidth="4">
          <path d="M3 12Q20 -5 38 12" />
          <path d="M8 18Q20 6 33 18" />
          <path d="M14 24Q20 18 27 24" />
        </g>
        <circle cx="20.500" cy="29" r="2.800" fill="currentColor" stroke="none" />
        <path strokeWidth="2.500" d="M33 24V35M29 31L33 35L37 31M43 33V21M39 25L43 21L47 25" />
      </svg>
      <svg viewBox="0 0 31 36" className="ml-2 h-9 w-[31px]" strokeWidth="4.200" strokeLinecap="round" role="img" aria-label="Signal">
        <path stroke="#eeeeee" d="M2.500 20V22M11 15V22M19.500 9V22M2.500 30V33" />
        <path stroke="#5f6467" d="M28 4V22M11 30V33M19.500 30V33M28 30V33" />
      </svg>
      <span className="ml-3 flex h-9 w-[63px] items-center justify-center overflow-hidden rounded-full bg-[linear-gradient(90deg,#eeeeee_78%,#919496_78%)] text-[26px] leading-9 font-bold text-[#4a4b4d]">
        78
      </span>
    </div>
  );
}

function Notification() {
  return (
    <button type="button" className="absolute inset-x-[12%] top-[119px] z-20 flex h-[101px] items-center overflow-hidden rounded-full bg-[#3b3b3d] pr-[36px] pl-7 text-left text-white shadow-[0_6px_24px_rgba(0,0,0,0.35)]">
      <svg viewBox="0 0 70 72" className="h-[72px] w-[70px] shrink-0" role="img" aria-label="WhatsApp">
        <path d="M28 2C40 0 49 5 56 13C64 22 69 35 67 47C65 60 48 69 33 69C18 69 5 58 3 42C1 24 9 5 28 2Z" fill="#000" stroke="#fff" strokeWidth="1.800" />
        <rect x="12" y="14" width="43" height="44" rx="15" fill="#25d366" />
        <g fill="#fff">
          <FaWhatsapp x="17" y="19" size="34" />
        </g>
        <g stroke="#fff" strokeWidth="3.200" strokeLinecap="round">
          <path d="M8 53V66M1.500 59.500H14.500M3.500 55L12.500 64M12.500 55L3.500 64" />
        </g>
        <circle cx="8" cy="59.500" r="2.500" fill="#f5b52a" />
      </svg>
      <span className="ml-6 w-[194px] shrink-0 text-[38px] leading-[50px] font-bold whitespace-pre not-italic">[ ⋆｡˚☆  ◌ ]</span>
      <span className="text-[37px] leading-[50px] font-bold whitespace-nowrap">New message from 1 chat</span>
      <svg viewBox="0 0 28 16" className="ml-auto h-4 w-7 shrink-0" fill="none" stroke="#8a8a8c" strokeWidth="4" strokeLinecap="round" strokeLinejoin="round" aria-hidden="true">
        <path d="M2 2L14 14L26 2" />
      </svg>
    </button>
  );
}

function Header() {
  return (
    <header className="relative flex h-[258px] shrink-0 flex-col border-b-2 border-[#171c20] bg-[#0a0f13] pt-9">
      <StatusBar />
      <div className="flex items-center pt-[52px] pr-[50px] pl-11">
        <button type="button" aria-label="Back" className="text-white">
          <svg viewBox="0 0 48 48" className="size-12" fill="none" stroke="currentColor" strokeWidth="5.500">
            <path d="M47 24H6M26 3L5 24L26 45" />
          </svg>
        </button>
        <span className="ml-[52px] size-[102px] rounded-full bg-[linear-gradient(100deg,#a0783c,#1d2a14_40%,#4d4a1a_55%,#182a12_75%,#7a5a2a)]" role="img" aria-label="Profile photo" />
        <button type="button" aria-label="More options" className="ml-auto text-white">
          <svg viewBox="0 0 24 48" className="h-12 w-6" fill="currentColor">
            <circle cx="12" cy="7" r="6" />
            <circle cx="12" cy="24" r="6" />
            <circle cx="12" cy="41" r="6" />
          </svg>
        </button>
      </div>
    </header>
  );
}

function Composer() {
  return (
    <form className="relative flex shrink-0 items-start gap-[13px] px-[13px] pt-[6px] pb-[13px]" onSubmit={(e) => e.preventDefault()}>
      <div className="mt-[5px] flex h-[132px] min-w-0 flex-1 items-center rounded-full bg-[#1f272a] pr-[35px] pl-[37px] text-[#8b9498]">
        <button type="button" aria-label="Stickers and emoji">
          <svg viewBox="0 0 58 58" className="size-[58px]" fill="none" stroke="currentColor" strokeWidth="5.500" strokeLinejoin="round">
            <path d="M20 4H38Q54 4 54 20V32Q54 36 51 39L37 51Q33 55 29 55H20Q4 55 4 39V20Q4 4 20 4Z" />
            <path d="M53 34H42Q32 34 32 43V54" />
            <circle cx="19" cy="21" r="4.200" fill="currentColor" stroke="none" />
            <circle cx="39" cy="21" r="4.200" fill="currentColor" stroke="none" />
            <path d="M16 35H36L31 44Q18 44 16 35Z" fill="currentColor" stroke="none" />
          </svg>
        </button>
        <input type="text" aria-label="Message" placeholder="Message" className="ml-9 min-w-0 flex-1 bg-transparent text-[51px] leading-[60px] italic outline-none placeholder:text-[#8b9498]" />
        <button type="button" aria-label="Attach">
          <svg viewBox="0 0 36 58" className="h-[58px] w-9" fill="none" stroke="currentColor" strokeWidth="5" strokeLinecap="round">
            <path d="M33.500 15V40Q33.500 56 18 56Q2.500 56 2.500 40V14Q2.500 3 13 3Q24 3 24 14V37Q24 44.500 18.500 44.500Q13 44.500 13 38V15" />
          </svg>
        </button>
        <button type="button" aria-label="Camera" className="ml-[91px]">
          <svg viewBox="0 0 58 52" className="h-[52px] w-[58px]" fill="none" stroke="currentColor" strokeWidth="5.500" strokeLinejoin="round">
            <path d="M4 9H17L22 3H36L41 9H54V49H4Z" />
            <circle cx="29" cy="29" r="10" strokeWidth="6" />
          </svg>
        </button>
      </div>
      <button type="button" aria-label="Record voice message" className="mr-0.5 flex size-[135px] items-center justify-center rounded-full bg-[#24c265] text-[#0a1014]">
        <svg viewBox="0 0 42 58" className="h-[58px] w-[42px]" fill="none" stroke="currentColor" strokeWidth="5.500" strokeLinecap="round">
          <rect x="12.500" y="2" width="17" height="35" rx="8.500" fill="currentColor" stroke="none" />
          <path d="M4 31Q6 45 21 45Q36 45 38 31M21 45V54" />
        </svg>
      </button>
    </form>
  );
}

export default function App() {
  return (
    <div className="relative flex h-screen flex-col overflow-hidden bg-[#0a0f13] italic [font-family:Lato,'Noto_Sans','DejaVu_Sans','Noto_Sans_CJK_JP',sans-serif] [font-variant-ligatures:none]">
      <Wallpaper />
      <Header />
      <main className="relative min-h-0 flex-1 overflow-hidden">
        <ul className="-mt-[34px] flex flex-col gap-[7px] px-12">
          {messages.map((m, i) => (
            <Bubble key={i} {...m} />
          ))}
        </ul>
      </main>
      <div className="relative">
        <button type="button" aria-label="Scroll to bottom" className="absolute right-[35px] bottom-[45px] flex size-[90px] items-center justify-center rounded-full bg-[#28333a] text-[#8f989c] shadow-[0_3px_8px_rgba(0,0,0,0.35)]">
          <svg viewBox="0 0 34 38" className="mt-2 h-[38px] w-[34px]" fill="none" stroke="currentColor" strokeWidth="5" strokeLinecap="round" strokeLinejoin="round">
            <path d="M3 4L17 18L31 4M3 21L17 35L31 21" />
          </svg>
        </button>
      </div>
      <Composer />
      <footer className="relative flex h-[42px] shrink-0 justify-center bg-black pt-4">
        <span className="h-[11px] w-[35%] rounded-full bg-[#5b5b5b]" />
      </footer>
      <div className="pointer-events-none absolute top-[-227px] left-1/2 z-10 flex size-[748px] -translate-x-1/2 items-center justify-center rounded-full bg-[rgba(0,187,10,0.41)]">
        <span className="size-[66px] rounded-full bg-[rgba(40,220,45,0.5)]" />
      </div>
      <Notification />
    </div>
  );
}
